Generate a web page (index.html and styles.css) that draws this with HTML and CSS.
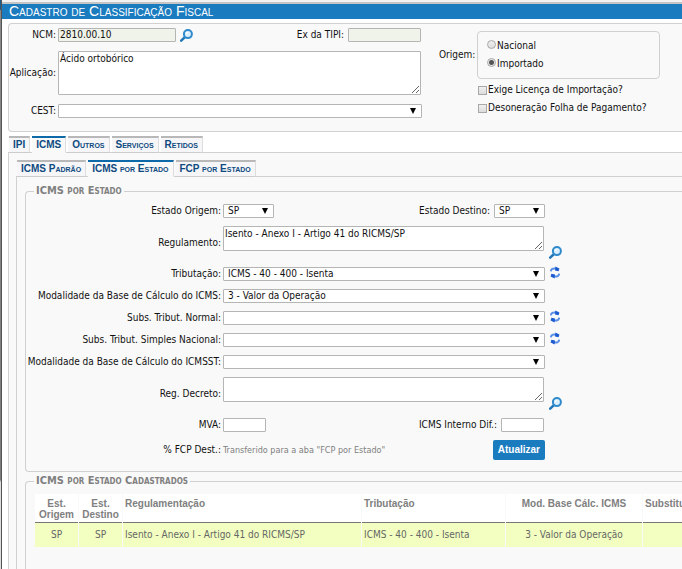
FILE: index.html
```
<!DOCTYPE html>
<html lang="pt-BR">
<head>
<meta charset="utf-8">
<meta name="viewport" content="width=device-width, initial-scale=1.0">
<link rel="stylesheet" href="styles.css">
<title>Cadastro de Classificação Fiscal</title>
</head>
<body>
  <!-- shared icons -->
  <svg class="sprite" aria-hidden="true">
    <symbol id="i-search" viewBox="0 0 13 13">
      <path d="M1.2 11.6 L4.6 8.4" stroke="#2277b8" stroke-width="2.6" stroke-linecap="round"/>
      <circle cx="7.9" cy="5.1" r="4" fill="#d9efff" stroke="#2f8acb" stroke-width="2"/>
      <path d="M6.2 4.8 A2 2 0 0 1 8.2 3.2" fill="none" stroke="#fff" stroke-width="1.1"/>
    </symbol>
    <symbol id="i-refresh" viewBox="0 0 10 13">
      <path d="M0.8 5.4 C1 3 3 2 6 2.6" fill="none" stroke="#5b8fe8" stroke-width="2"/>
      <path d="M5.4 0.4 L9.4 2.4 L8.6 5.2 L5 4.6 Z" fill="#1d5bd0"/>
      <path d="M9.2 7.6 C9 10 7 11 4 10.4" fill="none" stroke="#5b8fe8" stroke-width="2"/>
      <path d="M4.6 12.6 L0.6 10.6 L1.4 7.8 L5 8.4 Z" fill="#1d5bd0"/>
    </symbol>
  </svg>

  <div class="edge"></div>
  <main class="page">
    <h1>Cadastro de Classificação Fiscal</h1>

    <form class="content">
      <section class="header-box">
        <div class="fields">
          <div class="line">
            <label class="short" for="ncm">NCM:</label>
            <input class="ncm" id="ncm" type="text" value="2810.00.10" readonly>
            <button class="icon" type="button" aria-label="Pesquisar NCM"><svg><use href="#i-search"/></svg></button>
            <label class="push" for="tipi">Ex da TIPI:</label>
            <input class="tipi" id="tipi" type="text" readonly>
          </div>
          <div class="line">
            <label class="short" for="aplicacao">Aplicação:</label>
            <textarea class="tall" id="aplicacao">Ácido ortobórico</textarea>
          </div>
          <div class="line">
            <label class="short" for="cest">CEST:</label>
            <span class="select full"><select id="cest"><option></option></select></span>
          </div>
        </div>

        <div class="origin">
          <span id="origem">Origem:</span>
          <div class="radios" role="radiogroup" aria-labelledby="origem">
            <label><input type="radio" name="origem">Nacional</label>
            <label><input type="radio" name="origem" checked>Importado</label>
          </div>
          <div class="checks">
            <label><input type="checkbox">Exige Licença de Importação?</label>
            <label><input type="checkbox">Desoneração Folha de Pagamento?</label>
          </div>
        </div>
      </section>

      <nav class="tabs">
        <a href="#">IPI</a>
        <a href="#" class="active">ICMS</a>
        <a href="#">Outros</a>
        <a href="#">Serviços</a>
        <a href="#">Retidos</a>
      </nav>

      <div class="panel">
        <nav class="tabs">
          <a href="#">ICMS Padrão</a>
          <a href="#" class="active">ICMS por Estado</a>
          <a href="#">FCP por Estado</a>
        </nav>

        <div class="panel inner">
          <fieldset>
            <legend>ICMS por Estado</legend>
            <div class="rows">
              <div class="row">
                <label for="origem-uf">Estado Origem:</label>
                <div class="control">
                  <span class="select uf"><select id="origem-uf"><option>SP</option></select></span>
                  <label class="push" for="destino-uf">Estado Destino:</label>
                  <span class="select uf"><select id="destino-uf"><option>SP</option></select></span>
                </div>
              </div>
              <div class="row area">
                <label for="regulamento">Regulamento:</label>
                <div class="control"><textarea id="regulamento">Isento - Anexo I - Artigo 41 do RICMS/SP</textarea></div>
                <button class="icon" type="button" aria-label="Pesquisar regulamento"><svg><use href="#i-search"/></svg></button>
              </div>
              <div class="row">
                <label for="tributacao">Tributação:</label>
                <div class="control"><span class="select full"><select id="tributacao"><option>ICMS - 40 - 400 - Isenta</option></select></span></div>
                <button class="icon refresh" type="button" aria-label="Recarregar"><svg><use href="#i-refresh"/></svg></button>
              </div>
              <div class="row">
                <label for="base">Modalidade da Base de Cálculo do ICMS:</label>
                <div class="control"><span class="select full"><select id="base"><option>3 - Valor da Operação</option></select></span></div>
              </div>
              <div class="row">
                <label for="subs-normal">Subs. Tribut. Normal:</label>
                <div class="control"><span class="select full"><select id="subs-normal"><option></option></select></span></div>
                <button class="icon refresh" type="button" aria-label="Recarregar"><svg><use href="#i-refresh"/></svg></button>
              </div>
              <div class="row">
                <label for="subs-simples">Subs. Tribut. Simples Nacional:</label>
                <div class="control"><span class="select full"><select id="subs-simples"><option></option></select></span></div>
                <button class="icon refresh" type="button" aria-label="Recarregar"><svg><use href="#i-refresh"/></svg></button>
              </div>
              <div class="row">
                <label for="base-st">Modalidade da Base de Cálculo do ICMSST:</label>
                <div class="control"><span class="select full"><select id="base-st"><option></option></select></span></div>
              </div>
              <div class="row area">
                <label for="decreto">Reg. Decreto:</label>
                <div class="control"><textarea id="decreto"></textarea></div>
                <button class="icon" type="button" aria-label="Pesquisar decreto"><svg><use href="#i-search"/></svg></button>
              </div>
              <div class="row">
                <label for="mva">MVA:</label>
                <div class="control">
                  <input class="num" id="mva" type="text">
                  <label class="push" for="interno">ICMS Interno Dif.:</label>
                  <input class="num" id="interno" type="text">
                </div>
              </div>
              <div class="row">
                <span class="caption">% FCP Dest.:</span>
                <div class="control">
                  <span class="note">Transferido para a aba "FCP por Estado"</span>
                  <button class="btn push" type="button">Atualizar</button>
                </div>
              </div>
            </div>
          </fieldset>

          <fieldset class="list">
            <legend>ICMS por Estado Cadastrados</legend>
            <div class="table-wrap">
              <table>
                <thead>
                  <tr>
                    <th class="c-uf">Est. Origem</th>
                    <th class="c-uf">Est. Destino</th>
                    <th class="c-reg">Regulamentação</th>
                    <th class="c-trib">Tributação</th>
                    <th class="c-mod">Mod. Base Cálc. ICMS</th>
                    <th>Substituição</th>
                  </tr>
                </thead>
                <tbody>
                  <tr>
                    <td class="c-uf">SP</td>
                    <td class="c-uf">SP</td>
                    <td>Isento - Anexo I - Artigo 41 do RICMS/SP</td>
                    <td>ICMS - 40 - 400 - Isenta</td>
                    <td class="c-mod">3 - Valor da Operação</td>
                    <td></td>
                  </tr>
                </tbody>
              </table>
            </div>
          </fieldset>
        </div>
      </div>
    </form>
  </main>
</body>
</html>
```
FILE: styles.css
```
* {
  box-sizing: border-box;
}
body {
  display: flex;
  margin: 0;
  height: 100vh;
  overflow: hidden;
  background: #fff;
  color: #111;
  font: 10px/14px "DejaVu Sans Condensed", Tahoma, sans-serif;
}
input, select, textarea, button {
  margin: 0;
  font: inherit;
  color: inherit;
}
.sprite {
  position: absolute;
  width: 0;
  height: 0;
}

/* window edge on the left */
.edge {
  flex: none;
  width: 2px;
  background: linear-gradient(#1b5c8c 0 10px, #8a8a8a 10px, #7c7c7c 480px, #dcdcdc 482px);
  border-right: 1px solid #555;
}
.page {
  flex: 1;
  min-width: 0;
  display: flex;
  flex-direction: column;
  border-top: 2px solid #f2f2f2;
}
h1 {
  margin: 0;
  padding-left: 7px;
  border-top: 2px solid #c4c4c4;
  background: #1a7bbf;
  color: #fff;
  font: small-caps 14px/15px "Liberation Sans", Arial, sans-serif;
}
.content {
  flex: 1;
  display: flex;
  flex-direction: column;
  padding: 4px 0 0 6px;
}

/* top box */
.header-box {
  display: flex;
  gap: 17px;
  height: 109px;
  padding: 4px 0;
  border: 1px solid #d0d0d0;
  border-right: 0;
  border-radius: 4px 0 0 4px;
  background: #f9f9f9;
}
.fields {
  display: flex;
  flex-direction: column;
  gap: 9px;
  width: 413px;
}
.line {
  display: flex;
  align-items: center;
}
.short {
  flex: none;
  width: 49px;
  padding-right: 2px;
  text-align: right;
}
.push {
  margin-left: auto;
}
label.push {
  padding-right: 4px;
}
input[type=text], textarea, select {
  border: 1px solid #b5b5b5;
  border-radius: 1px;
  background: #fff;
  outline: none;
}
input[type=text] {
  height: 14px;
  padding: 0 1px;
}
input[readonly] {
  background: #f0f3e9;
}
.ncm {
  width: 118px;
}
.tipi {
  width: 73px;
  margin-right: 1px;
}
textarea {
  display: block;
  flex: 1;
  height: 25px;
  margin-right: 1px;
  padding: 0 1px;
  overflow: hidden;
}
.tall {
  height: 44px;
}
.select {
  position: relative;
  display: block;
}
.select::after {
  content: "";
  position: absolute;
  top: 4px;
  right: 6px;
  border: solid transparent;
  border-width: 6px 3px 0;
  border-top-color: #000;
  pointer-events: none;
}
select {
  appearance: none;
  display: block;
  width: 100%;
  height: 14px;
  padding: 0 4px;
  line-height: 12px;
}
.full {
  flex: 1;
}
.uf {
  width: 51px;
}
.num {
  width: 43px;
  margin-right: 1px;
}
.icon {
  display: block;
  padding: 0;
  margin-left: 4px;
  border: 0;
  background: none;
}
.icon svg {
  display: block;
  width: 13px;
  height: 13px;
}
.refresh {
  margin-left: 5px;
  padding-bottom: 3px;
}
.refresh svg {
  width: 10px;
}

.origin {
  display: grid;
  grid-template-columns: 38px 183px;
  grid-template-rows: 48px 36px;
  align-items: center;
  row-gap: 2px;
  padding-top: 3px;
  align-content: start;
}
.radios {
  display: flex;
  flex-direction: column;
  justify-content: center;
  gap: 4px;
  height: 48px;
  padding-left: 8px;
  border: 1px solid #d0d0d0;
  border-radius: 4px;
}
.checks {
  grid-column: 2;
  display: flex;
  flex-direction: column;
  gap: 4px;
}
.radios label, .checks label {
  display: flex;
  align-items: center;
  white-space: nowrap;
}
input[type=radio], input[type=checkbox] {
  appearance: none;
  flex: none;
  width: 9px;
  height: 9px;
  margin: 0 1px;
  border: 1px solid #a8a8a8;
  background: linear-gradient(#f0f0f0, #dcdcdc);
}
input[type=radio] {
  margin-bottom: 3px;
  border-radius: 50%;
}
input[type=radio]:checked {
  background: radial-gradient(#555 0 2px, #e8e8e8 3px);
}

/* tabs */
.tabs {
  display: flex;
  gap: 2px;
  margin: 4px 0 -1px 1px;
}
.tabs a {
  position: relative;
  height: 17px;
  padding: 0 4px;
  border-top: 2px solid #b8b8b8;
  border-right: 1px solid #ddd;
  border-bottom: 1px solid #ccc;
  background: #f6f6f8;
  color: #0e4a80;
  font: bold small-caps 10px/13px "Liberation Sans", Arial, sans-serif;
  text-decoration: none;
  white-space: nowrap;
}
.tabs .active {
  border-top-color: #0d69a8;
  border-bottom-color: #f9f9f9;
  background: #f9f9f9;
}
.panel {
  flex: 1;
  display: flex;
  flex-direction: column;
  min-width: 0;
  padding: 3px 0 0 7px;
  border: 1px solid #d0d0d0;
  border-width: 1px 0 0 1px;
  background: #f9f9f9;
}
.inner {
  padding: 7px 0 0 8px;
}

/* fieldsets */
fieldset {
  min-width: 0;
  margin: 0;
  padding: 6px 0 11px;
  border: 1px solid #d0d0d0;
  border-right: 0;
  border-radius: 4px 0 0 4px;
}
legend {
  margin-left: 8px;
  padding: 0 2px;
  color: #808080;
  font-size: 11px;
  font-weight: bold;
  font-variant: small-caps;
}
.rows {
  display: flex;
  flex-direction: column;
  gap: 8px;
}
.row {
  display: flex;
  align-items: center;
  height: 14px;
}
.row > label, .caption {
  flex: none;
  width: 197px;
  padding-right: 2px;
  text-align: right;
  white-space: nowrap;
}
.control {
  display: flex;
  align-items: center;
  width: 322px;
}
.area {
  height: 33px;
}
.area .control {
  align-self: flex-start;
}
.area .icon {
  align-self: flex-end;
}
.row:last-child {
  height: 20px;
}
.note {
  color: #808080;
  font-size: 9px;
}
.btn {
  height: 20px;
  padding: 0 5px;
  border: 0;
  border-radius: 2px;
  background: #1a7bbf;
  color: #fff;
  font: bold 10px/20px "Liberation Sans", Arial, sans-serif;
}

/* results */
.list {
  flex: 1;
  margin-top: 2px;
  border-bottom: 0;
  border-radius: 4px 0 0;
}
.table-wrap {
  overflow: hidden;
  padding-left: 9px;
}
table {
  width: 720px;
  table-layout: fixed;
  border-collapse: separate;
  border-spacing: 1px 0;
  margin-left: -1px;
  color: #666;
}
th {
  height: 29px;
  padding: 4px 2px 0;
  border-bottom: 1px solid #777;
  background: #fff;
  color: #808080;
  font: bold 10px/11px "Liberation Sans", Arial, sans-serif;
  text-align: left;
  vertical-align: top;
}
td {
  height: 24px;
  padding: 0 2px;
  background: #f2ffc0;
}
.c-uf, .c-mod {
  text-align: center;
}
th.c-uf {
  width: 43px;
}
th.c-reg {
  width: 238px;
}
th.c-trib {
  width: 143px;
}
th.c-mod {
  width: 136px;
}
```
